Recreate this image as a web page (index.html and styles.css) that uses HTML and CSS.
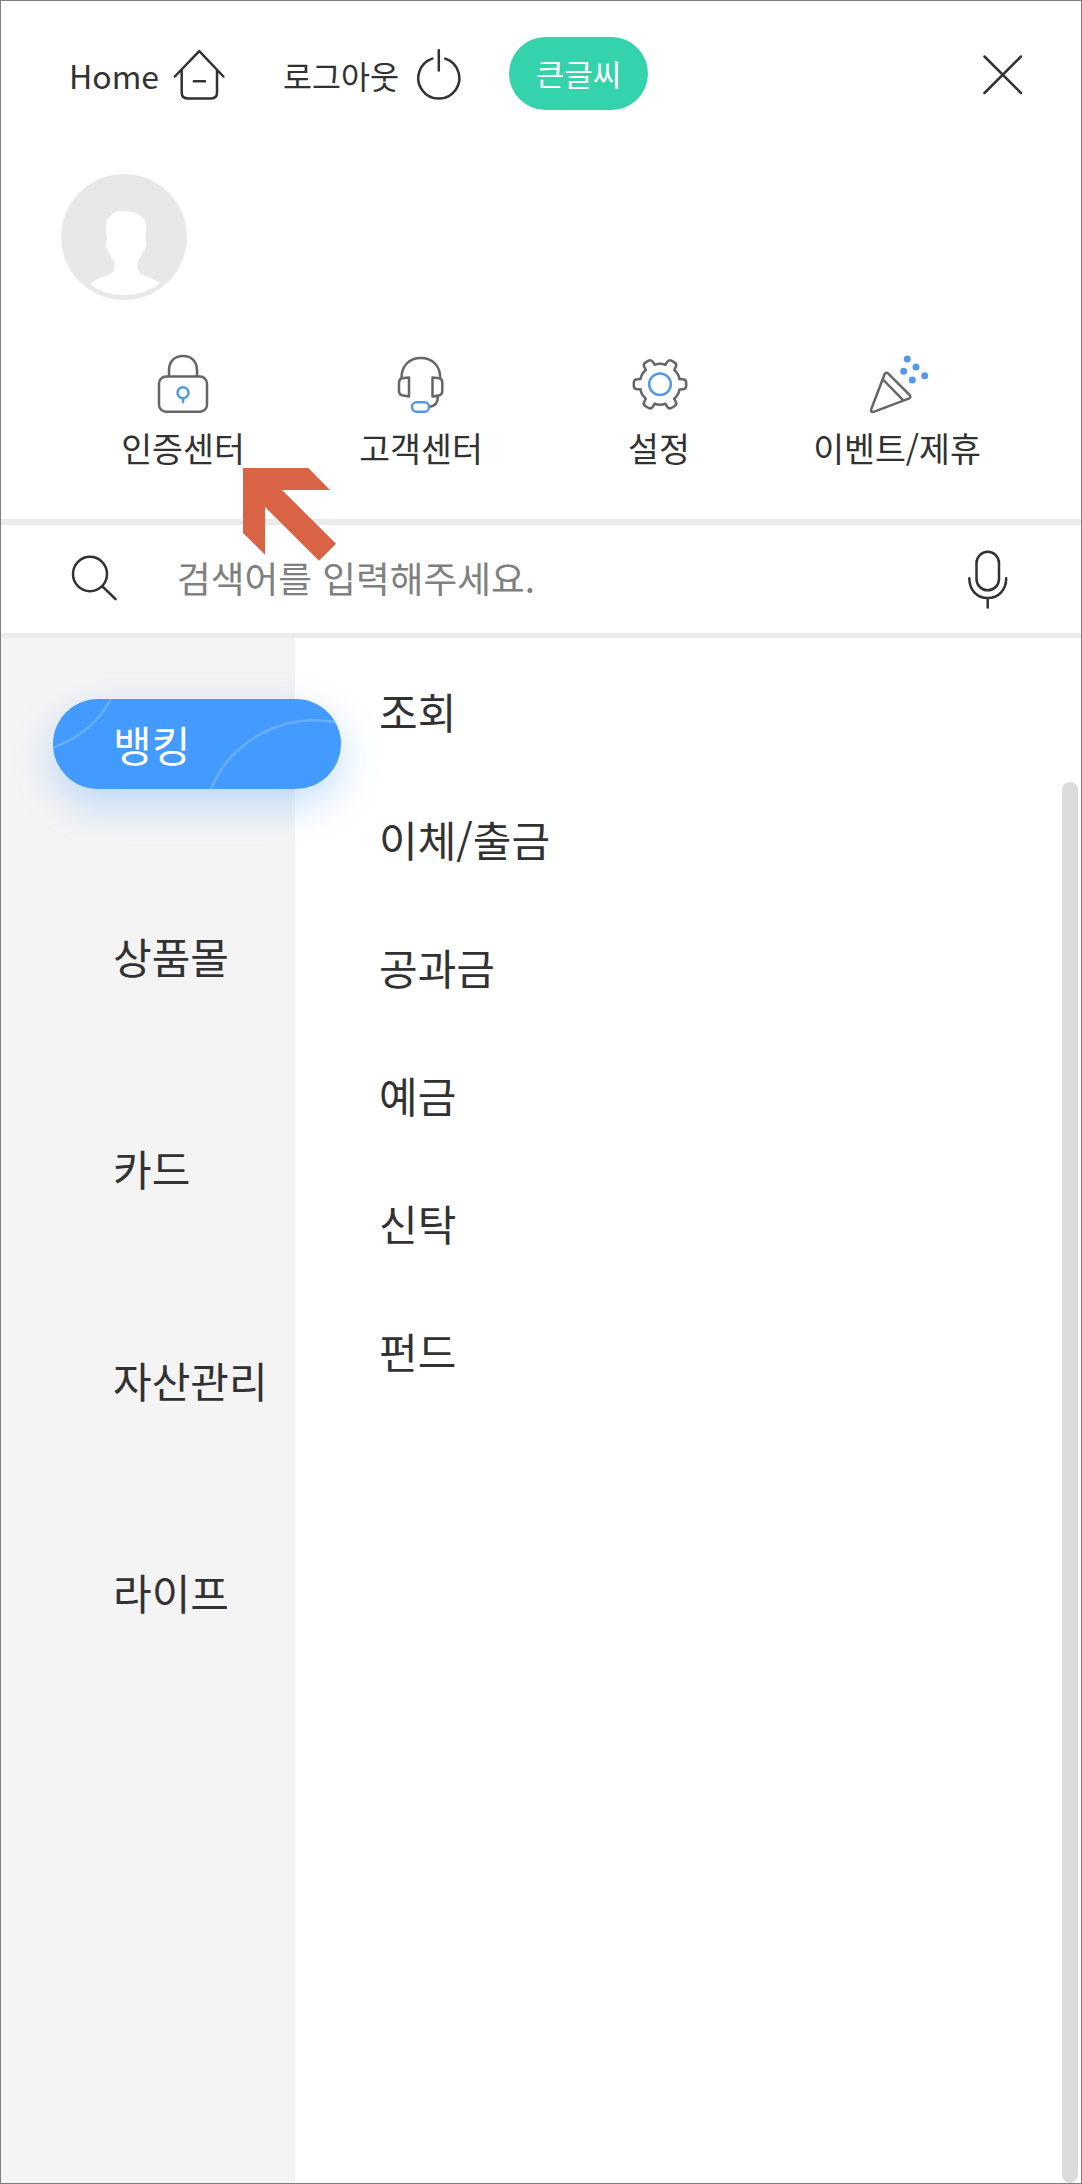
FILE: index.html
```html
<!DOCTYPE html>
<html lang="ko">
<head>
  <meta charset="UTF-8" />
  <meta name="viewport" content="width=device-width, initial-scale=1.0"/>
  <title>전체메뉴</title>
  <link rel="stylesheet" href="styles.css">
</head>
<body>
  <div class="app">
    <header class="topbar">
      <a class="top-link home">Home
        <svg width="54" height="54" viewBox="172 48 54 54">
          <path d="M174.8 76.5 199.3 51.2 223.4 76.5M181.7 70V92.5Q181.7 98.4 187.6 98.4H211Q217 98.4 217 92.5V70M193.8 81.3H205"/>
        </svg>
      </a>
      <a class="top-link logout">로그아웃
        <svg width="46" height="54" viewBox="416 48 46 54">
          <path d="M438.8 50.3V70.5M432.3 58.6A20.5 20.5 0 1 0 445.3 58.6"/>
        </svg>
      </a>
      <button class="big-text">큰글씨</button>
      <svg class="close" width="42" height="42" viewBox="0 0 42 42"><path d="M2.5 2.5 39 39M39 2.5 2.5 39"/></svg>
    </header>

    <div class="profile">
      <svg width="126" height="126" viewBox="0 0 126 126">
        <circle cx="63" cy="63" r="63" fill="#e8e8e8"/>
        <path fill="#fff" d="M45 54C45 44 51 37 61 37C68 36.5 73 38 76 40.5C82 42 85 47 85 54L84.5 66C86 68 85.5 75 81.5 78C80 83 78 86 76.500 88V94C77 98 79 99.5 81 100.5C88 103 94 106 99 109C90 117 76 121 63 121C50 121 37 117 29 110C35 105 42 103 48 100.5C52 99 53 97 53.5 94V88C51 85 49.5 82 48.500 78.5C44 75 44 69 46 66Z"/>
      </svg>
    </div>

    <nav class="shortcuts">
      <a class="shortcut">
        <svg width="64" height="64" viewBox="151 352 64 64">
          <rect x="159" y="376.5" width="48" height="35.2" rx="7"/>
          <path d="M169 376V370.5C169 361 175 356 183 356S197 361 197 370.5V376"/>
          <g class="blue"><circle cx="183" cy="392.7" r="5.5"/><path d="M183 398.5V402"/></g>
        </svg>
        인증센터
      </a>
      <a class="shortcut">
        <svg width="64" height="64" viewBox="389 352 64 64">
          <path d="M401.5 378C401.5 366 409 358 420.8 358S440.2 366 440.2 378M409 377.5V396.5L402 395.3Q399 394.5 399 391V383Q399 379 402 378.3ZM432.5 377.5V396.5L439.5 395.3Q442.3 394.5 442.3 391V383Q442.3 379 439.5 378.3ZM438 396Q438 406 429 407"/>
          <rect class="blue" x="412" y="402.3" width="17" height="9.4" rx="4.5"/>
        </svg>
        고객센터
      </a>
      <a class="shortcut">
        <svg width="64" height="64" viewBox="-33 -32.3 64 64">
          <defs><path id="tooth" d="M19.5-5.2 22.5-5Q26.2-5 26.2-1.5V1.5Q26.2 5 22.5 5L19.5 5.2Q18.5 10.8 14.25 14.3"/></defs>
          <use href="#tooth"/>
          <use href="#tooth" transform="rotate(60)"/>
          <use href="#tooth" transform="rotate(120)"/>
          <use href="#tooth" transform="rotate(180)"/>
          <use href="#tooth" transform="rotate(240)"/>
          <use href="#tooth" transform="rotate(300)"/>
          <circle class="blue" r="10.8"/>
        </svg>
        설정
      </a>
      <a class="shortcut">
        <svg width="64" height="64" viewBox="865 352 64 64">
          <path d="M884.6 374.2Q886 371.5 888.3 373.7L909.5 394.8Q911.6 397.3 908.7 398.7L873.6 411.8Q870.3 412.5 871.2 409.3ZM883.5 380 903.3 400.3"/>
          <g class="dots"><circle cx="907.3" cy="359" r="3.5"/><circle cx="916" cy="367" r="3.5"/><circle cx="903.7" cy="371.3" r="3.5"/><circle cx="924.7" cy="375.7" r="3.5"/><circle cx="912.3" cy="380" r="3.5"/></g>
        </svg>
        이벤트/제휴
      </a>
    </nav>

    <div class="search">
      <svg width="50" height="50" viewBox="70 556 50 50">
        <ellipse cx="90" cy="575" rx="17" ry="17.2"/><path d="M102.5 587.5 115.6 600.2"/>
      </svg>
      <span class="placeholder">검색어를 입력해주세요.</span>
      <svg width="44" height="62" viewBox="966 550 44 62">
        <rect x="976.5" y="552.8" width="22.5" height="38.5" rx="11.25"/>
        <path d="M969.3 579.3C969.3 591 977 599 987.7 599S1006.2 591 1006.2 579.3M987.7 599V608.5"/>
      </svg>
    </div>

    <main class="menu">
      <ul class="categories">
        <li class="active">
          <svg width="288" height="90" viewBox="53 699 288 90"><path d="M53 747.5Q92 734 111 699M211 789C230 743 280 711 341 723"/></svg>
          <span>뱅킹</span>
        </li>
        <li>상품몰</li>
        <li>카드</li>
        <li>자산관리</li>
        <li>라이프</li>
      </ul>
      <ul class="items">
        <li>조회</li>
        <li>이체/출금</li>
        <li>공과금</li>
        <li>예금</li>
        <li>신탁</li>
        <li>펀드</li>
      </ul>
      <div class="scrollbar"></div>
    </main>

    <svg class="pointer" width="93" height="93" viewBox="0 0 93 93"><path d="M0 0H65.3L87 22H39L93 75.7 76 92.7 22 39V86.7L0 65Z"/></svg>
  </div>
</body>
</html>
```
FILE: styles.css
```css
:root {
  --text: #323232;
  --blue: #439aff;
  --line: #ebebeb;
  --side: #f4f4f4;
}

* {
  box-sizing: border-box;
}

body {
  margin: 0;
  font-family: 'Noto Sans CJK KR', sans-serif;
  font-weight: 400;
  color: var(--text);
  background: #fff;
}

ul {
  list-style: none;
  margin: 0;
  padding: 0;
}

svg {
  display: block;
  flex: none;
  fill: none;
  stroke: var(--text);
  stroke-width: 2.5;
  stroke-linecap: round;
  stroke-linejoin: round;
}

.app {
  position: relative;
  display: flex;
  flex-direction: column;
  height: 2184px;
  border: 1px solid #7f7f7f;
  overflow: hidden;
}

.topbar {
  display: flex;
  align-items: center;
  height: 146px;
  padding: 2px 0 0 68px;
  font-size: 32px;
}

.top-link {
  display: flex;
  align-items: center;
  justify-content: space-between;
  line-height: 52px;
}

.home {
  width: 157px;
}

.logout {
  width: 179px;
  margin-left: 57px;
  font-size: 31.5px;
}

.big-text {
  width: 139px;
  height: 73px;
  margin: 0 0 4px 47px;
  padding: 0 0 2px;
  border: none;
  border-radius: 37px;
  background: #35d3ab;
  color: #fff;
  font: inherit;
  font-size: 31px;
}

.close {
  margin-left: auto;
  margin-right: 57px;
}

.profile {
  height: 181px;
  padding: 27px 0 0 60px;
}

.profile svg {
  stroke: none;
}

.shortcuts {
  display: grid;
  grid-template-columns: repeat(4, 238px);
  height: 191px;
  padding: 24px 0 0 63px;
}

.shortcut {
  display: flex;
  flex-direction: column;
  align-items: center;
  font-size: 33.6px;
  line-height: 64px;
}

.shortcut svg {
  stroke: #666;
}

.shortcut .blue {
  stroke: #5599e6;
}

.dots {
  fill: #5599e6;
  stroke: none;
}

.search {
  display: flex;
  align-items: center;
  height: 119px;
  padding: 2px 71px 0 69px;
  border-top: 6px solid var(--line);
  border-bottom: 5px solid var(--line);
}

.placeholder {
  flex: 1;
  margin-left: 57px;
  padding-bottom: 6px;
  color: #808080;
  font-size: 36.7px;
}

.menu {
  display: flex;
  flex: 1;
  font-size: 42px;
}

.categories {
  width: 294px;
  flex: none;
  background: var(--side);
}

.categories li {
  height: 90px;
  margin-bottom: 122px;
  padding-left: 112px;
  line-height: 90px;
  white-space: nowrap;
}

.categories .active {
  display: grid;
  width: 288px;
  margin: 61px 0 122px 52px;
  padding: 0;
  border-radius: 45px;
  background: var(--blue);
  box-shadow: 0 15px 40px rgba(67, 154, 255, 0.32);
  color: #fff;
  overflow: hidden;
}

.active > * {
  grid-area: 1 / 1;
}

.active svg {
  stroke: rgba(255, 255, 255, 0.2);
}

.active span {
  padding-left: 60px;
}

.items {
  flex: 1;
  padding: 9px 0 0 84px;
}

.items li {
  line-height: 128px;
}

.scrollbar {
  width: 16px;
  margin: 144px 3px 0 0;
  border-radius: 8px;
  background: #dcdcdc;
}

/* arrow drawn over the shortcuts and the search bar */
.pointer {
  position: absolute;
  left: 242px;
  top: 467px;
  fill: #d86445;
  stroke: none;
}
```
